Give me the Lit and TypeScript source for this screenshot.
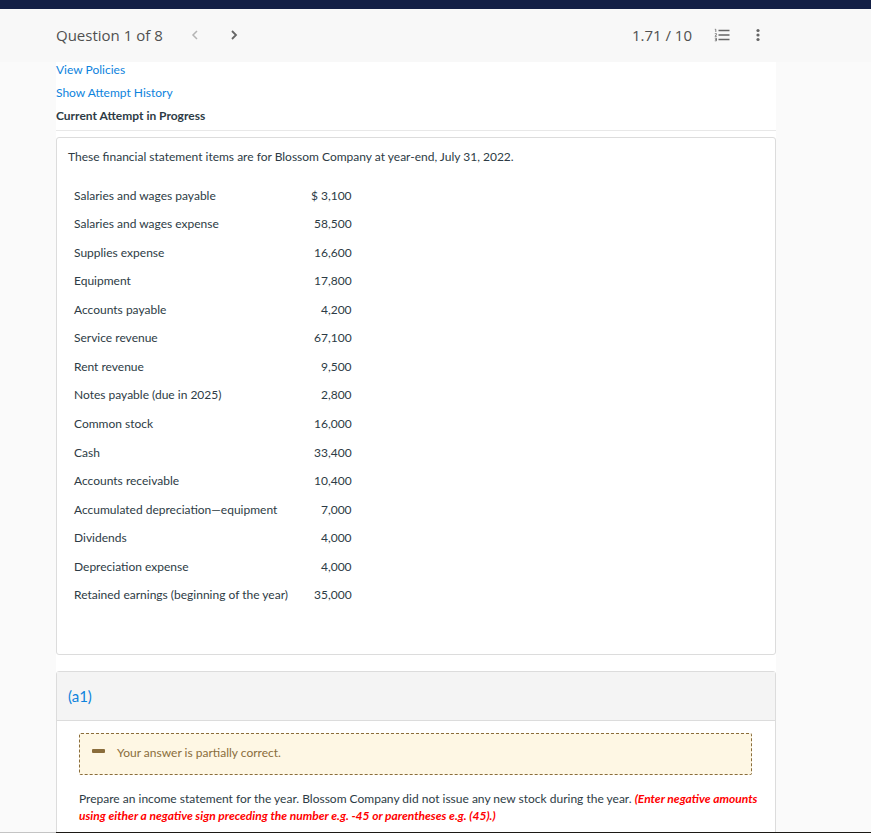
import { LitElement, html, css } from "lit";
import { customElement } from "lit/decorators.js";

const ITEMS: [string, string][] = [
  ["Salaries and wages payable", "$ 3,100"],
  ["Salaries and wages expense", "58,500"],
  ["Supplies expense", "16,600"],
  ["Equipment", "17,800"],
  ["Accounts payable", "4,200"],
  ["Service revenue", "67,100"],
  ["Rent revenue", "9,500"],
  ["Notes payable (due in 2025)", "2,800"],
  ["Common stock", "16,000"],
  ["Cash", "33,400"],
  ["Accounts receivable", "10,400"],
  ["Accumulated depreciation—equipment", "7,000"],
  ["Dividends", "4,000"],
  ["Depreciation expense", "4,000"],
  ["Retained earnings (beginning of the year)", "35,000"],
];

@customElement("question-toolbar")
export class QuestionToolbar extends LitElement {
  static styles = css`
    :host {
      display: flex;
      align-items: center;
      height: 53px;
      box-sizing: border-box;
      padding: 0 101px 1px 56px;
      background: #f8f8f8;
      color: #505050;
      font-family: "Open Sans", sans-serif;
      font-size: 15px;
      line-height: 20px;
    }
    h1 {
      margin: 0 20px 0 0;
      font-size: 15px;
      font-weight: 400;
    }
    button {
      display: flex;
      align-items: center;
      justify-content: center;
      width: 24px;
      height: 24px;
      padding: 0;
      border: 0;
      background: none;
      color: #666;
    }
    button:disabled {
      color: #b4b4b4;
    }
    .next {
      margin-left: 15px;
    }
    .score {
      margin-left: auto;
      margin-right: 18px;
    }
    .more {
      margin-left: 12px;
    }
    svg {
      display: block;
    }
  `;

  render() {
    return html`
      <h1>Question 1 of 8</h1>
      <button disabled aria-label="Previous question">
        <svg width="8" height="10" viewBox="0 0 8 10" fill="none" stroke="currentColor" stroke-width="1.5">
          <path d="M6 1 2 5l4 4" />
        </svg>
      </button>
      <button class="next" aria-label="Next question">
        <svg width="8" height="10" viewBox="0 0 8 10" fill="none" stroke="currentColor" stroke-width="1.8">
          <path d="M2 1l4 4-4 4" />
        </svg>
      </button>
      <span class="score">1.71 / 10</span>
      <button aria-label="Question list">
        <svg width="16" height="14" viewBox="0 0 16 14" fill="none" stroke="currentColor">
          <path d="M4.500 2.500h11M4.500 7h11M4.500 11.500h11" stroke-width="1.500" />
          <path d="M.8 1.300h1v2.700M.8 5.700h1.700v.9L1 8.300h1.800M.8 10.200h1.700v2.600H.8M1.200 11.500h1.300" stroke-width=".8" />
        </svg>
      </button>
      <button class="more" aria-label="More options">
        <svg width="4" height="14" viewBox="0 0 4 14" fill="currentColor">
          <circle cx="2" cy="2.500" r="1.600" />
          <circle cx="2" cy="7" r="1.600" />
          <circle cx="2" cy="11.500" r="1.600" />
        </svg>
      </button>
    `;
  }
}

@customElement("app-root")
export class AppRoot extends LitElement {
  static styles = css`
    :host {
      display: flex;
      flex-direction: column;
      height: 100vh;
      background: #fafafa;
      color: #2d3b45;
      font-family: Lato, sans-serif;
      font-size: 12px;
      line-height: 17px;
    }
    .brand {
      flex: none;
      height: 9px;
      background: #131f45;
    }
    question-toolbar {
      flex: none;
    }
    main {
      flex: 1;
      min-height: 0;
      overflow: hidden;
      padding: 0 95px 0 56px;
    }
    .sheet {
      background: #fff;
    }
    .intro {
      display: grid;
      gap: 7px;
      justify-items: start;
      padding-bottom: 7px;
      border-bottom: 1px solid #e8e8e8;
      line-height: 16px;
    }
    a {
      color: #0d83dd;
      text-decoration: none;
    }
    h2 {
      margin: 0;
      font-size: 12px;
      font-weight: 700;
      line-height: 15px;
    }
    .card {
      margin-top: 6px;
      border: 1px solid #dcdcdc;
      border-radius: 3px;
    }
    .problem {
      padding: 10px 11px 45px;
    }
    p {
      margin: 0;
    }
    table {
      height: 428px;
      margin-top: 16px;
      border-collapse: collapse;
    }
    th,
    td {
      padding: 0 6px;
      font-weight: 400;
      text-align: left;
      white-space: nowrap;
    }
    td {
      padding-left: 17px;
      text-align: right;
    }
    .part {
      margin-top: 16px;
    }
    .part-title {
      padding: 14px 11px;
      border-bottom: 1px solid #dcdcdc;
      background: #f4f4f4;
      font-size: 15px;
      font-weight: 400;
      line-height: 20px;
      color: #0d83dd;
    }
    .part-body {
      padding: 12px 11px 24px 22px;
    }
    .alert {
      display: flex;
      gap: 12px;
      height: 40px;
      margin: 0 12px 15px 0;
      border: 1px dashed #8a6d3b;
      border-radius: 2px;
      padding: 0 12px;
      background: #fef7e4;
      color: #8a6d3b;
      line-height: 38px;
    }
    .alert svg {
      margin-top: 15px;
    }
    em {
      color: #f00;
      font-weight: 700;
    }
    footer {
      flex: none;
      height: 1px;
      background: linear-gradient(to right, #c4c4c4 56px, #1c1915 56px);
    }
  `;

  render() {
    return html`
      <div class="brand"></div>
      <question-toolbar></question-toolbar>
      <main>
        <div class="sheet">
          <div class="intro">
            <a href="#policies">View Policies</a>
            <a href="#history">Show Attempt History</a>
            <h2>Current Attempt in Progress</h2>
          </div>
          <section class="card problem">
            <p>These financial statement items are for Blossom Company at year-end, July 31, 2022.</p>
            <table>
              <tbody>
                ${ITEMS.map(
                  ([name, amount]) => html`<tr>
                    <th scope="row">${name}</th>
                    <td>${amount}</td>
                  </tr>`
                )}
              </tbody>
            </table>
          </section>
          <section class="card part">
            <h2 class="part-title">(a1)</h2>
            <div class="part-body">
              <div class="alert" role="status">
                <svg width="13" height="4" viewBox="0 0 13 4" aria-hidden="true">
                  <rect width="13" height="4" rx="1" fill="currentColor" />
                </svg>
                <span>Your answer is partially correct.</span>
              </div>
              <p>
                Prepare an income statement for the year. Blossom Company did not issue any new stock during the year.
                <em>(Enter negative amounts using either a negative sign preceding the number e.g. -45 or parentheses e.g. (45).)</em>
              </p>
            </div>
          </section>
        </div>
      </main>
      <footer></footer>
    `;
  }
}
